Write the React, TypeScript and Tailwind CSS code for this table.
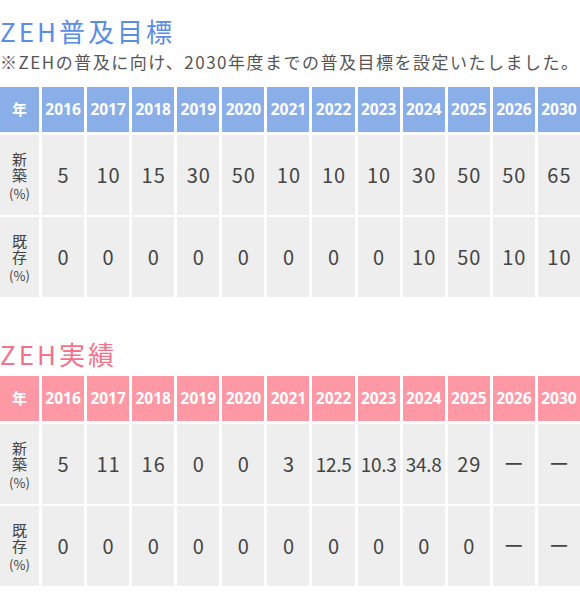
import React from 'react';

const years = ['2016', '2017', '2018', '2019', '2020', '2021', '2022', '2023', '2024', '2025', '2026', '2030'];

const targetRows = [
  { label: '新築', values: ['5', '10', '15', '30', '50', '10', '10', '10', '30', '50', '50', '65'] },
  { label: '既存', values: ['0', '0', '0', '0', '0', '0', '0', '0', '10', '50', '10', '10'] },
];

const resultRows = [
  { label: '新築', values: ['5', '11', '16', '0', '0', '3', '12.5', '10.3', '34.8', '29', 'ー', 'ー'] },
  { label: '既存', values: ['0', '0', '0', '0', '0', '0', '0', '0', '0', '0', 'ー', 'ー'] },
];

type Row = { label: string; values: string[] };

function YearTable({ rows, headClass }: { rows: Row[]; headClass: string }) {
  return (
    <div className="grid grid-cols-[39px_repeat(12,1fr)] gap-x-[3px] gap-y-[2px]">
      <div className={`${headClass} h-[45px] mb-[1px] flex items-center justify-center text-white font-bold text-[15px]`}>
        年
      </div>
      {years.map((y) => (
        <div
          key={y}
          className={`${headClass} h-[45px] mb-[1px] flex items-center justify-center text-white font-bold text-[15.5px] font-['Noto_Sans','Noto_Sans_CJK_JP',sans-serif]`}
        >
          {y}
        </div>
      ))}
      {rows.map((r) => (
        <React.Fragment key={r.label}>
          <div className="bg-[#eeeeee] h-[80px] flex flex-col items-center justify-center text-[#444] pt-[2px]">
            <span className="text-[15px] leading-[16px] w-[15px] text-center">{r.label}</span>
            <span className="text-[13px] leading-[16px] mt-[3px]">(%)</span>
          </div>
          {r.values.map((v, i) => (
            <div
              key={i}
              className={`bg-[#eeeeee] h-[80px] flex items-center justify-center text-[#444] whitespace-nowrap ${
                v.includes('.') ? 'text-[19px] tracking-[-0.3px]' : 'text-[20px] tracking-[1px] indent-[1px]'
              }`}
            >
              {v}
            </div>
          ))}
        </React.Fragment>
      ))}
    </div>
  );
}

export default function App() {
  return (
    <div className="w-[580px] bg-white font-['Noto_Sans_CJK_JP',sans-serif]">
      <section className="pt-[14px]">
        <h2 className="text-[26px] leading-[34px] font-normal text-[#5b8de3] tracking-[3px]">ZEH普及目標</h2>
        <p className="text-[17px] leading-[26px] text-[#555] tracking-[1.5px] mt-[1px] mb-[12px] whitespace-nowrap">
          ※ZEHの普及に向け、2030年度までの普及目標を設定いたしました。
        </p>
        <YearTable rows={targetRows} headClass="bg-[#8aaee8]" />
      </section>
      <section className="pt-[40px] pb-[14px]">
        <h2 className="text-[26px] leading-[34px] font-normal text-[#f4728a] tracking-[3px] mb-[5px]">ZEH実績</h2>
        <YearTable rows={resultRows} headClass="bg-[#fe98a5]" />
      </section>
    </div>
  );
}
